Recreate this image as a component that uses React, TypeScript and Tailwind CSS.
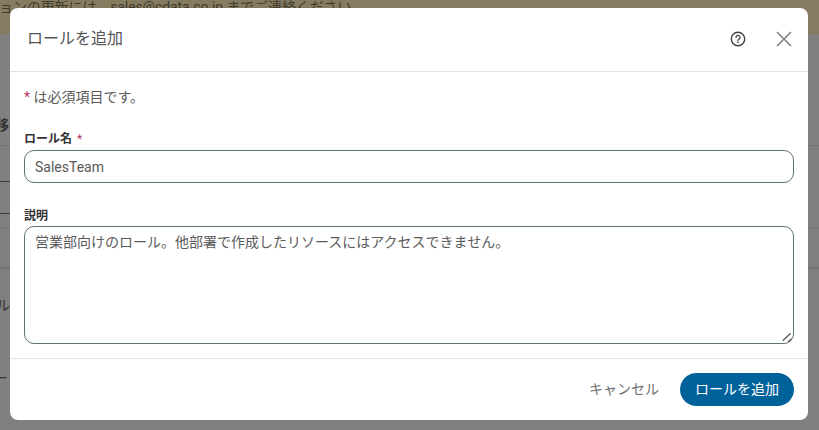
import { useState } from 'react'

const font = "font-['Roboto','Noto_Sans_CJK_JP',sans-serif]"

function Backdrop() {
  return (
    <div className="absolute inset-0 flex flex-col bg-[#808080] overflow-hidden">
      <div className="h-[34px] bg-[#857b60] text-[14px] text-[#3f3a2a] leading-[20px] whitespace-nowrap shrink-0">
        <div className="-mt-[3px] -ml-[1px] tracking-[-0.1px]">ョンの更新には、sales@cdata.co.jp までご連絡ください。</div>
      </div>
      <div className="flex flex-col text-[14px] text-[#333]">
        <div className="h-[112px] pt-[81px] border-b border-[#767676]">
          <span className="-ml-[5px] block font-bold">移</span>
        </div>
        <div className="h-[36px] w-[10px] border-b border-[#3f3f3f]" />
        <div className="h-[32px] w-[10px] border-b border-[#3f3f3f]" />
        <div className="h-[15px] border-b border-[#767676]" />
        <div className="h-[40px] border-b-2 border-[#727272]" />
        <div className="h-[60px] pt-[26px]">
          <span className="-ml-[4px] block">ル</span>
        </div>
        <div className="h-[60px] pt-[39px]">
          <span className="-ml-[6px] block">ー</span>
        </div>
      </div>
    </div>
  )
}

export default function App() {
  const [name, setName] = useState('SalesTeam')
  const [desc, setDesc] = useState('営業部向けのロール。他部署で作成したリソースにはアクセスできません。')

  return (
    <div className={`relative w-[819px] h-[430px] overflow-hidden ${font}`}>
      <Backdrop />
      <div className="absolute left-[10px] top-[8px] w-[798px] h-[412px] bg-white rounded-[8px] flex flex-col">
        <div className="h-[64px] shrink-0 flex items-center justify-between pb-[2px] pl-[17px] pr-[16px] border-b border-[#e3e3e3]">
          <h2 className="text-[16px] text-[#555] font-normal">ロールを追加</h2>
          <div className="flex items-center gap-[30px]">
            <svg width="16" height="16" viewBox="0 0 16 16" fill="none" className="text-[#444]">
              <circle cx="8" cy="8" r="6.7" stroke="currentColor" strokeWidth="1.4" />
              <path d="M6 6.4a2 2 0 1 1 3 1.7c-.7.4-1 .8-1 1.4" stroke="currentColor" strokeWidth="1.3" strokeLinecap="round" />
              <circle cx="8" cy="11.4" r=".8" fill="currentColor" />
            </svg>
            <svg width="16" height="16" viewBox="0 0 16 16" fill="none" className="text-[#808080]">
              <path d="M1 1l14 14M15 1L1 15" stroke="currentColor" strokeWidth="1.6" />
            </svg>
          </div>
        </div>
        <div className="flex-1 flex flex-col px-[14px]">
          <p className="mt-[16px] text-[14px] leading-[18px] text-[#5a5a5a]">
            <span className="text-[#b5375f]">*</span> は必須項目です。
          </p>
          <label className="mt-[25px] text-[12px] leading-[16px] font-bold text-[#333]">
            ロール名 <span className="ml-[2px] text-[#b5375f] font-normal">*</span>
          </label>
          <input
            value={name}
            onChange={e => setName(e.target.value)}
            className="mt-[3px] h-[33px] w-full rounded-[10px] border border-[#5f7278] px-[10px] text-[14px] text-[#5a5a5a] outline-none"
          />
          <label className="mt-[25px] text-[12px] leading-[16px] font-bold text-[#333]">説明</label>
          <div className="relative mt-[2px] h-[118px]">
            <textarea
              value={desc}
              onChange={e => setDesc(e.target.value)}
              className="h-full w-full rounded-[10px] border border-[#5f7278] px-[10px] py-[5px] text-[14px] leading-[20px] text-[#5a5a5a] outline-none resize-none"
            />
            <svg width="12" height="12" viewBox="0 0 12 12" fill="none" className="absolute right-[2px] bottom-[2px] pointer-events-none text-[#555]">
              <path d="M2.7 10.7l8-7.4M8 11.8l3.8-3.2" stroke="currentColor" strokeWidth="1.2" />
            </svg>
          </div>
        </div>
        <div className="h-[62px] shrink-0 flex items-center justify-end gap-[21px] pr-[14px] border-t border-[#e3e3e3]">
          <button className="text-[14px] text-[#707070]">キャンセル</button>
          <button className="h-[33px] w-[114px] rounded-full bg-[#00629b] text-[14px] text-white">ロールを追加</button>
        </div>
      </div>
    </div>
  )
}
